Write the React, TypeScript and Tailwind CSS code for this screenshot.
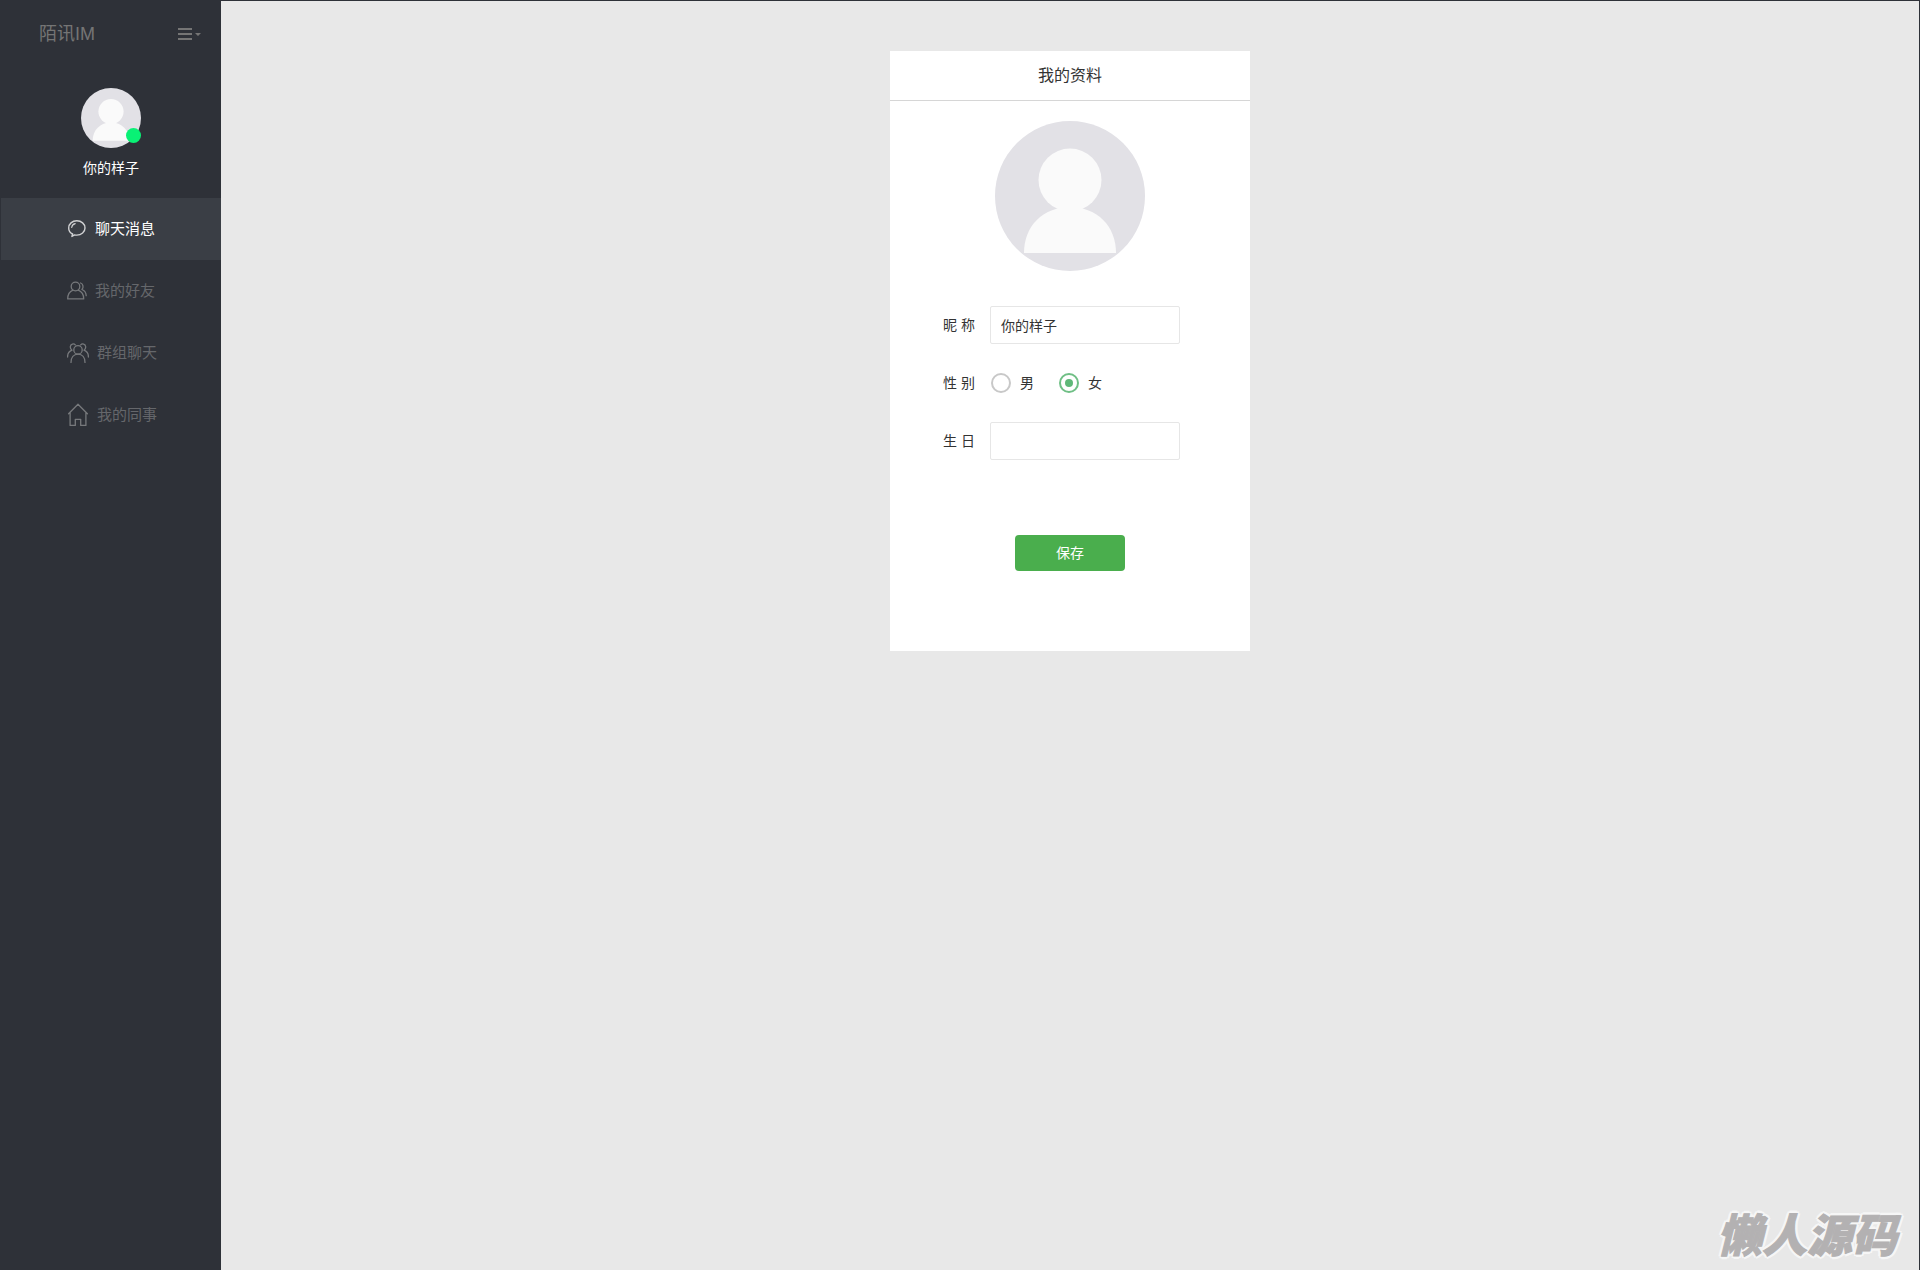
import React, { useState } from 'react';
import clsx from 'clsx';

const ChatIcon: React.FC = () => (
  <svg width="20" height="20" viewBox="0 0 20 20" fill="none" stroke="currentColor" strokeWidth="1.4" strokeLinecap="round" strokeLinejoin="round">
    <path d="M5.600 15C3.100 13.900 1.700 11.600 1.700 8.900C1.700 4.900 5.200 1.800 9.800 1.800s8.200 3.100 8.200 7.100-3.600 7.200-8.200 7.200c-.8 0-1.500-.1-2.200-.2L4.900 17.400z" />
    <path d="M4.700 8.500c.2-2.100 1.500-3.400 3.500-3.900" strokeWidth="1.1" />
  </svg>
);

const FriendIcon: React.FC = () => (
  <svg width="20" height="20" viewBox="0 0 20 20" fill="none" stroke="currentColor" strokeWidth="1.3" strokeLinecap="round" strokeLinejoin="round">
    <circle cx="8.500" cy="5.500" r="4.300" />
    <path d="M6 9.100C2.800 10.300.7 13.300.7 17.900h16c0-4.600-2.200-7.600-5.500-8.800" />
    <path d="M13.600 2c2.600.9 3.300 4.300 1.300 6.500 2.600 1 4.200 3.400 4.300 6.200" />
  </svg>
);

const GroupIcon: React.FC = () => (
  <svg width="22" height="20" viewBox="0 0 22 20" fill="none" stroke="currentColor" strokeWidth="1.3" strokeLinecap="round" strokeLinejoin="round">
    <circle cx="11" cy="6.900" r="4.200" />
    <path d="M4 19.400c0-5 2.700-8.300 7-8.300s7 3.300 7 8.300" />
    <path d="M8.300 1.900C6.900.3 3.600.7 3.300 3.700c-.1 1.600.6 2.700 1.700 3.500C2 8.300.5 11 .6 14" />
    <path d="M13.700 1.900c1.400-1.600 4.700-1.200 5 1.800.1 1.600-.6 2.700-1.700 3.500 3 1.100 4.500 3.800 4.400 6.800" />
  </svg>
);

const HomeIcon: React.FC = () => (
  <svg width="22" height="24" viewBox="0 0 22 24" fill="none" stroke="currentColor" strokeWidth="1.3" strokeLinejoin="round" strokeLinecap="round">
    <path d="M1.600 10.700L11 1.200l9.400 9.500M3.100 9.500v12.900h5.200v-6.100h5.400v6.100h5.200V9.500" />
  </svg>
);

const Avatar: React.FC<{ className: string }> = ({ className }) => (
  <svg className={clsx('block rounded-full', className)} viewBox="0 0 150 150" role="img" aria-label="头像">
    <rect width="150" height="150" fill="#e2e1e6" />
    <circle cx="75" cy="59" r="31.500" fill="#fafafa" />
    <path d="M29 132c0-27 19-46 46-46s46 19 46 46z" fill="#fafafa" />
  </svg>
);

const menus = [
  { label: '聊天消息', icon: ChatIcon },
  { label: '我的好友', icon: FriendIcon },
  { label: '群组聊天', icon: GroupIcon },
  { label: '我的同事', icon: HomeIcon },
];

const Sidebar: React.FC = () => {
  const [active, setActive] = useState(0);

  return (
    <aside className="w-[220px] shrink-0 bg-[#2e3138]">
      <div className="flex h-[66px] items-center justify-between pr-5 pl-[38px] text-[#757575]">
        <h1 className="text-lg">陌讯IM</h1>
        <button type="button" aria-label="菜单" className="cursor-pointer">
          <svg width="23" height="12" viewBox="0 0 23 12" fill="currentColor">
            <path d="M0 0h14v2H0zM0 5h14v2H0zM0 10h14v2H0zM17 5h6l-3 3z" />
          </svg>
        </button>
      </div>
      <div className="flex h-[131px] flex-col items-center pt-[21px]">
        <div className="relative">
          <Avatar className="size-[60px]" />
          <span className="absolute right-0 bottom-[5px] size-[15px] rounded-full bg-[#09f175]" />
        </div>
        <p className="mt-2.5 text-sm text-white">你的样子</p>
      </div>
      <nav>
        {menus.map(({ label, icon: Icon }, i) => (
          <a
            key={label}
            href="#"
            onClick={() => setActive(i)}
            className={clsx(
              'flex h-[62px] items-center gap-2 pl-[66px] text-[15px]',
              i === active ? 'bg-[#3a3e45] text-white' : 'text-[#65676b]'
            )}
          >
            <span className={i === active ? 'text-[#d0d1d3]' : 'text-[#77797c]'}>
              <Icon />
            </span>
            {label}
          </a>
        ))}
      </nav>
    </aside>
  );
};

const inputClass = 'h-[38px] w-[190px] rounded-xs border border-[#e6e6e6] bg-white px-2.5 text-sm outline-none';

const Profile: React.FC = () => {
  const [name, setName] = useState('你的样子');
  const [birthday, setBirthday] = useState('');
  const [sex, setSex] = useState('女');

  return (
    <section className="w-[360px] self-start bg-white pb-20 text-[#333]">
      <h2 className="h-[50px] border-b border-[#d6d6d6] text-center text-base leading-[49px]">我的资料</h2>
      <Avatar className="mx-auto mt-5 size-[150px]" />
      <form className="mt-[35px]" onSubmit={(e) => e.preventDefault()}>
        <div className="flex flex-col gap-5 pl-[53px] text-sm">
          <div className="flex h-[38px] items-center">
            <label htmlFor="name" className="w-[47px]">昵 称</label>
            <input id="name" className={inputClass} value={name} onChange={(e) => setName(e.target.value)} />
          </div>
          <div className="flex h-[38px] items-center" role="radiogroup" aria-labelledby="sex">
            <span id="sex" className="w-[48px]">性 别</span>
            {['男', '女'].map((item) => (
              <label key={item} className="mr-[25px] flex items-center gap-[9px]">
                <input
                  type="radio"
                  name="sex"
                  checked={sex === item}
                  onChange={() => setSex(item)}
                  className="grid size-5 appearance-none place-items-center rounded-full border-2 border-[#c8c8c8] checked:border-[#6fbf85] checked:before:size-2 checked:before:rounded-full checked:before:bg-[#5fb878]"
                />
                {item}
              </label>
            ))}
          </div>
          <div className="flex h-[38px] items-center">
            <label htmlFor="birthday" className="w-[47px]">生 日</label>
            <input id="birthday" className={inputClass} value={birthday} onChange={(e) => setBirthday(e.target.value)} />
          </div>
        </div>
        <button type="submit" className="mx-auto mt-[75px] block h-9 w-[110px] cursor-pointer rounded bg-[#4aae4d] text-sm text-white">
          保存
        </button>
      </form>
    </section>
  );
};

export default function App() {
  return (
    <div className="relative flex min-h-screen border-x border-t border-[#2e3138] bg-[#e8e8e8] font-['Liberation_Sans','Noto_Sans_CJK_SC',sans-serif]">
      <Sidebar />
      <main className="flex flex-1 justify-center pt-[50px]">
        <Profile />
      </main>
      <div className="pointer-events-none absolute right-[22px] bottom-[11px] text-[45px] leading-none font-black text-[#b3b1b2] italic [-webkit-text-stroke:1px_#b3b1b2] [text-shadow:3px_0_#f6f6f6,-3px_0_#f6f6f6,0_3px_#f6f6f6,0_-3px_#f6f6f6,2px_2px_#f6f6f6,-2px_-2px_#f6f6f6,2px_-2px_#f6f6f6,-2px_2px_#f6f6f6]">
        懒人源码
      </div>
    </div>
  );
}
